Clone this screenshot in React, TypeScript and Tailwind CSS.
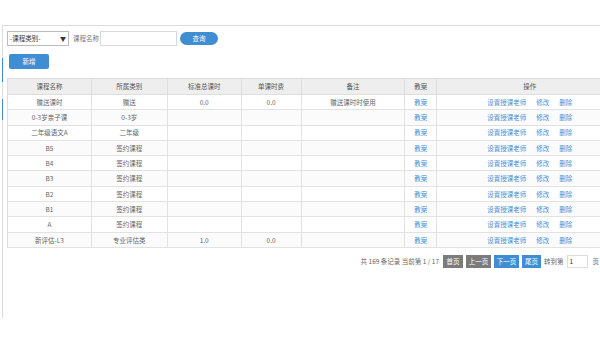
const ROWS: [string, string, string, string, string][] = [
  ["赠送课时", "赠送", "0.0", "0.0", "赠送课时时使用"],
  ["0-3岁亲子课", "0-3岁", "", "", ""],
  ["二年级语文A", "二年级", "", "", ""],
  ["B5", "签约课程", "", "", ""],
  ["B4", "签约课程", "", "", ""],
  ["B3", "签约课程", "", "", ""],
  ["B2", "签约课程", "", "", ""],
  ["B1", "签约课程", "", "", ""],
  ["A", "签约课程", "", "", ""],
  ["新评估-L3", "专业评估类", "1.0", "0.0", ""],
];

const HEAD = ["课程名称", "所属类别", "标准总课时", "单课时费", "备注", "教案", "操作"];
// 列宽，表格比窗口宽，右侧被裁掉
const W = ["w-[84px]", "w-[76px]", "w-[74px]", "w-[60px]", "w-[104px]", "w-[32px]", "w-[186px]"];

export default function App() {
  return (
    <div
      className="relative w-[600px] h-[350px] overflow-hidden bg-white text-[6.5px] leading-none text-[#666]"
      style={{ fontFamily: '"Noto Sans CJK SC", "Noto Sans", sans-serif' }}
    >
      <div className="h-[25px]" />
      <div className="relative ml-[2px] h-[293px] border-l border-t border-[#dcdcdc] px-[3px]">
        <span className="absolute left-[-1px] top-[32px] h-[24px] w-px bg-[#3d8bd0]" />
        <span className="absolute left-[-1px] top-[73px] h-[21px] w-px bg-[#3d8bd0]" />

        {/* 搜索 */}
        <div className="mt-[5px] flex items-center">
          <div className="ml-px flex h-[15px] w-[62px] items-center justify-between border border-[#bbb] px-[2px] text-[#333]">
            <span>-课程类别-</span>
            <span className="text-[6px]">▼</span>
          </div>
          <span className="ml-[4px] text-[#777]">课程名称</span>
          <div className="ml-[1px] h-[15px] w-[77px] border border-[#d8d8d8]" />
          <button className="ml-[3px] h-[13px] w-[38px] rounded-full bg-[#3f8dd2] text-white">查询</button>
        </div>

        <button className="ml-[3px] mt-[8px] h-[15px] w-[40px] rounded-[2px] bg-[#3f8dd2] text-white">新增</button>

        {/* 表格 */}
        <div className="ml-px mt-[9px] w-[616px] border-l border-t border-[#dedede]">
          <div className="flex h-[16px] bg-[#eeeeee] text-[#555]">
            {HEAD.map((h, i) => (
              <div key={h} className={`${W[i]} flex items-center justify-center border-b border-r border-[#dedede]`}>
                {h}
              </div>
            ))}
          </div>
          {ROWS.map((r, ri) => (
            <div key={ri} className={`flex h-[15.3px] ${ri % 2 ? "bg-[#fbfbfb]" : "bg-white"}`}>
              {r.map((c, i) => (
                <div key={i} className={`${W[i]} flex items-center justify-center border-b border-r border-[#e2e2e2]`}>
                  {c}
                </div>
              ))}
              <div className={`${W[5]} flex items-center justify-center border-b border-r border-[#e2e2e2] text-[#4a8fd3]`}>
                教案
              </div>
              <div className={`${W[6]} flex items-center justify-center gap-[10px] border-b border-r border-[#e2e2e2] text-[#4a8fd3]`}>
                <span>设置授课老师</span>
                <span>修改</span>
                <span>删除</span>
              </div>
            </div>
          ))}
        </div>

        {/* 分页 */}
        <div className="mt-[7px] flex h-[13px] items-center justify-end gap-[3px] text-[#666]">
          <span className="mr-px">共 169 条记录 当前第 1 / 17</span>
          <span className="flex h-[13px] w-[20px] items-center justify-center bg-[#7b7b7b] text-white">首页</span>
          <span className="flex h-[13px] w-[25px] items-center justify-center bg-[#7b7b7b] text-white">上一页</span>
          <span className="flex h-[13px] w-[25px] items-center justify-center bg-[#3f8dd2] text-white">下一页</span>
          <span className="flex h-[13px] w-[19px] items-center justify-center bg-[#3f8dd2] text-white">尾页</span>
          <span>转到第</span>
          <span className="flex h-[13px] w-[21px] items-center border border-[#ddd] pl-[2px] text-[#333]">1</span>
          <span className="ml-[2px] mr-[-2px]">页</span>
        </div>
      </div>
    </div>
  );
}
